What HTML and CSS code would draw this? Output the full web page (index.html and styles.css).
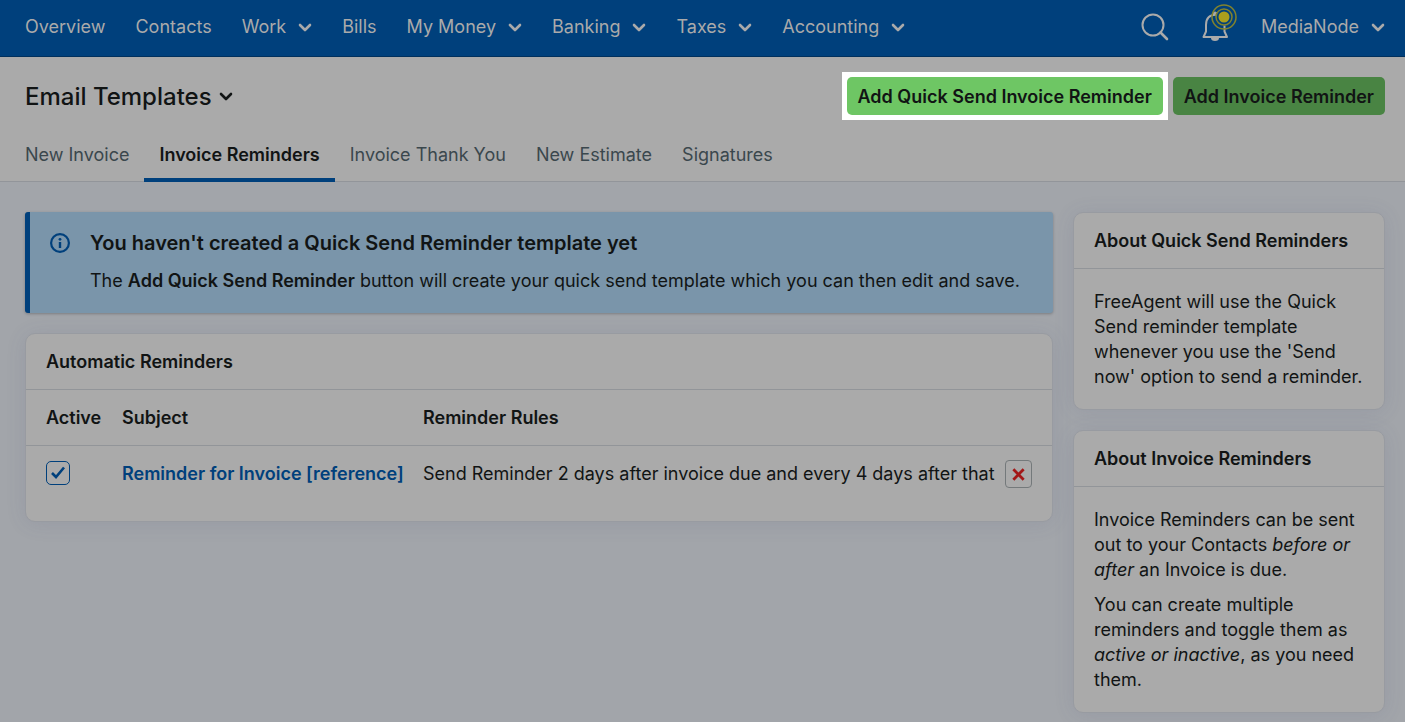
FILE: index.html
```html
<!DOCTYPE html>
<html lang="en">
<head>
    <meta charset="UTF-8">
    <meta name="viewport" content="width=device-width, initial-scale=1.0">
    <title>Email Templates</title>
    <link rel="stylesheet" href="styles.css">
</head>
<body>
    <svg class="sprite" aria-hidden="true">
        <symbol id="chevron" viewBox="0 0 14 14">
            <path d="M2 5l5 5 5-5" fill="none" stroke="currentColor" stroke-width="2.6" stroke-linecap="round" stroke-linejoin="round"/>
        </symbol>
    </svg>

    <nav class="nav">
        <ul class="nav-list">
            <li><a href="#">Overview</a></li>
            <li><a href="#">Contacts</a></li>
            <li><a href="#">Work <svg class="chevron"><use href="#chevron"/></svg></a></li>
            <li><a href="#">Bills</a></li>
            <li><a href="#">My Money <svg class="chevron"><use href="#chevron"/></svg></a></li>
            <li><a href="#">Banking <svg class="chevron"><use href="#chevron"/></svg></a></li>
            <li><a href="#">Taxes <svg class="chevron"><use href="#chevron"/></svg></a></li>
            <li><a href="#">Accounting <svg class="chevron"><use href="#chevron"/></svg></a></li>
        </ul>
        <div class="nav-tools">
            <button class="icon-button" type="button" aria-label="Search">
                <svg width="28" height="28" viewBox="0 0 28 28" fill="none" stroke="currentColor">
                    <circle cx="12" cy="12" r="10.5" stroke-width="2"/>
                    <path d="M19.5 19.5l6.500 6.500" stroke-width="2.600" stroke-linecap="round"/>
                </svg>
            </button>
            <button class="icon-button" type="button" aria-label="Notifications">
                <svg width="36" height="46" viewBox="0 2 36 46" fill="none">
                    <path d="M15.500 12.800c-7-.3-10.500 3.500-10.500 10.200v6.500l-2.500 5.500h23.500l-2.500-5.500v-6" stroke="currentColor" stroke-width="2" stroke-linejoin="round"/>
                    <path d="M12 12a2 2 0 0 1 4 0z" fill="currentColor" stroke="currentColor"/>
                    <path d="M10 36h8a4 3 0 0 1-8 0z" fill="currentColor"/>
                    <g class="ping">
                        <circle cx="23" cy="15" r="12"/>
                        <circle class="ping-inner" cx="23" cy="15" r="8"/>
                        <circle class="ping-dot" cx="23" cy="15" r="5.500"/>
                    </g>
                </svg>
            </button>
            <a class="account" href="#">MediaNode <svg class="chevron"><use href="#chevron"/></svg></a>
        </div>
    </nav>

    <header class="header">
        <div class="header-top">
            <h1>Email Templates <svg class="chevron"><use href="#chevron"/></svg></h1>
            <div class="actions">
                <div class="spotlight">
                    <button class="button" type="button">Add Quick Send Invoice Reminder</button>
                </div>
                <button class="button" type="button">Add Invoice Reminder</button>
            </div>
        </div>
        <div class="tabs">
            <a href="#">New Invoice</a>
            <a href="#" class="active" aria-current="page">Invoice Reminders</a>
            <a href="#">Invoice Thank You</a>
            <a href="#">New Estimate</a>
            <a href="#">Signatures</a>
        </div>
    </header>

    <div class="layout">
        <main class="main">
            <section class="alert">
                <svg class="alert-icon" viewBox="0 0 20 20">
                    <circle cx="10" cy="10" r="8.900" fill="none" stroke="currentColor" stroke-width="2.200"/>
                    <path d="M10 9v6" stroke="currentColor" stroke-width="2.400"/>
                    <circle cx="10" cy="6.300" r="1.400" fill="currentColor"/>
                </svg>
                <div>
                    <h2>You haven't created a Quick Send Reminder template yet</h2>
                    <p>The <strong>Add Quick Send Reminder</strong> button will create your quick send template which you can then edit and save.</p>
                </div>
            </section>

            <section class="card">
                <h3>Automatic Reminders</h3>
                <table class="reminders">
                    <thead>
                        <tr>
                            <th class="col-active">Active</th>
                            <th class="col-subject">Subject</th>
                            <th colspan="2">Reminder Rules</th>
                        </tr>
                    </thead>
                    <tbody>
                        <tr>
                            <td>
                                <label class="check">
                                    <input type="checkbox" aria-label="Active" checked>
                                    <svg viewBox="0 0 24 24"><path d="M6 12l4 4 8-9.500" fill="none" stroke="currentColor" stroke-width="2.600"/></svg>
                                </label>
                            </td>
                            <td><a class="subject" href="#">Reminder for Invoice [reference]</a></td>
                            <td>Send Reminder 2 days after invoice due and every 4 days after that</td>
                            <td class="col-delete">
                                <button class="delete" type="button" aria-label="Delete reminder">
                                    <svg width="13" height="13" viewBox="0 0 14 14"><path d="M2.500 2.500l9 9M11.500 2.500l-9 9" stroke="currentColor" stroke-width="3" stroke-linecap="square"/></svg>
                                </button>
                            </td>
                        </tr>
                    </tbody>
                </table>
            </section>
        </main>

        <aside class="sidebar">
            <section class="card">
                <h3>About Quick Send Reminders</h3>
                <div class="card-body">
                    <p>FreeAgent will use the Quick Send reminder template whenever you use the 'Send now' option to send a reminder.</p>
                </div>
            </section>
            <section class="card">
                <h3>About Invoice Reminders</h3>
                <div class="card-body">
                    <p>Invoice Reminders can be sent out to your Contacts <em>before or after</em> an Invoice is due.</p>
                    <p>You can create multiple reminders and toggle them as <em>active or inactive</em>, as you need them.</p>
                </div>
            </section>
        </aside>
    </div>
</body>
</html>
```
FILE: styles.css
```css
* {
    box-sizing: border-box;
}
body {
    margin: 0;
    background: #a2a5aa;
    color: #111414;
    font: 18px/25px Inter, "Liberation Sans", sans-serif;
}
h1, h2, h3, p, ul {
    margin: 0;
    padding: 0;
}
a {
    color: inherit;
    text-decoration: none;
}
button {
    font: inherit;
    cursor: pointer;
}
.sprite {
    display: none;
}
.chevron {
    width: 14px;
    height: 14px;
    flex: none;
}

/* top navigation */
.nav {
    display: flex;
    justify-content: space-between;
    align-items: center;
    height: 57px;
    padding: 0 20px 3px 25px;
    background: #00407c;
    border-bottom: 1px solid #00305d;
    color: #aaaaaa;
}
.nav-list {
    display: flex;
    gap: 30px;
    list-style: none;
}
.nav-list a, .account {
    display: flex;
    align-items: center;
    gap: 12px;
    white-space: nowrap;
}
.nav-tools {
    display: flex;
    align-items: center;
    gap: 24px;
}
.icon-button {
    display: flex;
    padding: 0;
    border: 0;
    background: none;
    color: inherit;
}
.icon-button + .icon-button {
    margin-left: 8px;
}
.ping circle {
    fill: none;
    stroke: #81832d;
    stroke-width: 1.5;
}
.ping .ping-inner {
    fill: #00407c;
}
.ping .ping-dot {
    fill: #aa9f1c;
    stroke: none;
}

/* page header */
.header {
    background: #aaaaaa;
    border-bottom: 1px solid #92959a;
}
.header-top {
    display: flex;
    justify-content: space-between;
    align-items: center;
    padding: 20px 20px 0 25px;
}
h1 {
    display: flex;
    align-items: center;
    gap: 7px;
    font-size: 24px;
    font-weight: 500;
}
.actions {
    display: flex;
    gap: 10px;
}
.button {
    height: 38px;
    padding: 0 11px;
    border: 0;
    border-radius: 5px;
    background: #498443;
    color: #111414;
    font-weight: 600;
    white-space: nowrap;
}
.spotlight {
    display: flex;
    margin: -5px;
    padding: 5px;
    background: #ffffff;
}
.spotlight .button {
    background: #6ec664;
}
.tabs {
    display: flex;
    padding: 12px 10px 0;
    margin-bottom: -1px;
}
.tabs a {
    padding: 15px 15px 11px;
    border-bottom: 4px solid transparent;
    color: #3a474d;
}
.tabs .active {
    border-color: #00407c;
    color: #111414;
    font-weight: 600;
}

/* content */
.layout {
    display: flex;
    align-items: flex-start;
    gap: 20px;
    padding: 30px 20px 9px 25px;
}
.main {
    flex: 1;
}
.sidebar {
    width: 312px;
    flex: none;
}
.main, .sidebar {
    display: flex;
    flex-direction: column;
    gap: 20px;
}
.alert {
    display: flex;
    gap: 20px;
    padding: 19px 20px 20px;
    border-left: 5px solid #00407c;
    border-radius: 3px;
    background: #7a95aa;
    box-shadow: 0 1px 3px rgba(0, 0, 0, 0.25);
}
.alert-icon {
    width: 20px;
    height: 20px;
    margin-top: 2px;
    flex: none;
    color: #00407c;
}
.alert h2 {
    margin-bottom: 12px;
    font-size: 20px;
    font-weight: 600;
}
strong {
    font-weight: 600;
}
.card {
    border: 1px solid #989ba1;
    border-radius: 10px;
    background: #aaaaaa;
    box-shadow: 0 2px 20px rgba(70, 85, 125, 0.12);
}
.card h3 {
    padding: 15px 20px;
    border-bottom: 1px solid #929599;
    font-size: 18px;
    font-weight: 600;
}
.card-body {
    display: flex;
    flex-direction: column;
    gap: 10px;
    padding: 20px;
}

.reminders {
    width: 100%;
    border-spacing: 0;
}
.reminders th {
    height: 56px;
    padding: 0 0 0 20px;
    border-bottom: 1px solid #929599;
    font-weight: 600;
    text-align: left;
}
.reminders td {
    padding: 15px 0 35px 20px;
    line-height: 25px;
    vertical-align: top;
}
.reminders th + th, .reminders td + td {
    padding-left: 0;
}
.reminders .col-active {
    width: 96px;
}
.reminders .col-subject {
    width: 301px;
}
.reminders .col-delete {
    padding: 14px 20px 0 0;
    text-align: right;
}
.subject {
    color: #00407c;
    font-weight: 600;
}
.check {
    display: grid;
    width: 24px;
    height: 24px;
    color: #00407c;
}
.check input, .check svg {
    grid-area: 1 / 1;
    width: 24px;
    height: 24px;
    margin: 0;
}
.check input {
    appearance: none;
    border: 1px solid #00407c;
    border-radius: 5px;
}
.check svg {
    pointer-events: none;
}
.check input:not(:checked) + svg {
    visibility: hidden;
}
.delete {
    display: inline-flex;
    align-items: center;
    justify-content: center;
    width: 27px;
    height: 28px;
    padding: 0;
    border: 1px solid #74797b;
    border-radius: 4px;
    background: none;
    color: #a31717;
    vertical-align: top;
}
```
